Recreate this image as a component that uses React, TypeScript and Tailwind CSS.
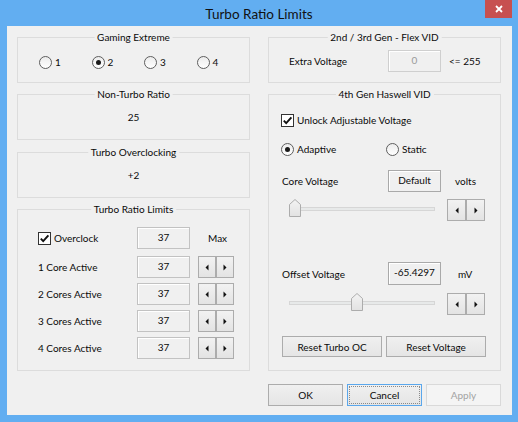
import type { ReactNode } from "react";

function GroupBox({ title, className, children }: { title: string; className?: string; children?: ReactNode }) {
  return (
    <div className={`relative border border-[#dcdcdc] ${className ?? ""}`}>
      <span className="absolute left-1/2 -top-[8px] -translate-x-1/2 whitespace-nowrap bg-[#f0f0f0] px-[3px] leading-[14px]">
        {title}
      </span>
      {children}
    </div>
  );
}

function Radio({ checked, label }: { checked?: boolean; label: string }) {
  return (
    <span className="flex items-center gap-[3px]">
      <span className="flex h-[13px] w-[13px] items-center justify-center rounded-full border border-[#5e5e5e] bg-linear-to-b from-[#ececec] to-white">
        {checked && <span className="h-[5px] w-[5px] rounded-full bg-[#1a1a1a]" />}
      </span>
      <span>{label}</span>
    </span>
  );
}

function Checkbox() {
  return (
    <span className="flex h-[13px] w-[13px] items-center justify-center border border-[#333] bg-white">
      <svg width="11" height="11" viewBox="0 0 11 11">
        <path d="M1.8 5.6 L4.2 8.2 L9.4 2.4" fill="none" stroke="#111" strokeWidth="1.9" />
      </svg>
    </span>
  );
}

function Arrow({ dir }: { dir: "l" | "r" }) {
  return (
    <svg width="4" height="7" viewBox="0 0 4 7">
      <path d={dir === "l" ? "M3.5 0.5 L0.5 3.5 L3.5 6.5 Z" : "M0.5 0.5 L3.5 3.5 L0.5 6.5 Z"} fill="#111" />
    </svg>
  );
}

function Spin({ wide, className }: { wide?: boolean; className?: string }) {
  const b = `flex h-[22px] items-center justify-center border border-[#acacac] bg-linear-to-b from-[#f2f2f2] to-[#e3e3e3] ${
    wide ? "w-[19px]" : "w-[18px]"
  }`;
  return (
    <div className={`flex ${className ?? ""}`}>
      <div className={b}>
        <Arrow dir="l" />
      </div>
      <div className={b}>
        <Arrow dir="r" />
      </div>
    </div>
  );
}

function ValueBox({ children, className }: { children: ReactNode; className?: string }) {
  return (
    <div
      className={`flex h-[22px] w-[53px] justify-center border bg-[#f0f0f0] pt-[2px] leading-[14px] shadow-[inset_1px_1px_0_#fff] ${
        className ?? "border-[#c2c2c2]"
      }`}
    >
      {children}
    </div>
  );
}

function Slider({ thumb }: { thumb: "start" | "mid" }) {
  return (
    <div className="relative ml-[8px] h-[17px] w-[146px] self-start pt-[8px]">
      <div className="h-[4px] w-full border border-[#d6d6d6] bg-[#e7e9e9]" />
      <svg
        width="12"
        height="18"
        viewBox="0 0 12 18"
        className={`absolute top-0 ${thumb === "start" ? "left-0" : "left-[62px]"}`}
      >
        <defs>
          <linearGradient id={`th-${thumb}`} x1="0" y1="0" x2="0" y2="1">
            <stop offset="0" stopColor="#f3f3f3" />
            <stop offset="1" stopColor="#e2e2e2" />
          </linearGradient>
        </defs>
        <path d="M0.5 17.5 V5.5 L6 0.5 L11.5 5.5 V17.5 Z" fill={`url(#th-${thumb})`} stroke="#acacac" />
      </svg>
    </div>
  );
}

function Button({ children, className }: { children: ReactNode; className?: string }) {
  return (
    <div
      className={`flex items-center justify-center border ${
        className ?? "border-[#acacac] bg-linear-to-b from-[#f0f0f0] to-[#e5e5e5]"
      }`}
    >
      <span>{children}</span>
    </div>
  );
}

const cores = ["1 Core Active", "2 Cores Active", "3 Cores Active", "4 Cores Active"];

export default function App() {
  return (
    <div className="flex h-[422px] w-[518px] flex-col bg-[#62aef1] font-[Lato,'Noto_Sans',sans-serif] text-[10px] leading-[14px] text-[#0a0a0a]">
      {/* title bar */}
      <div className="flex h-[26px] shrink-0">
        <div className="w-[33px]" />
        <div className="flex flex-1 items-center justify-center pt-[1px] text-[13.5px] text-[#111]">Turbo Ratio Limits</div>
        <div className="flex w-[33px] items-start">
          <div className="flex h-[18px] w-[27px] items-center justify-center bg-[#c75050]">
            <svg width="8" height="8" viewBox="0 0 8 8">
              <path d="M1 1 L7 7 M7 1 L1 7" stroke="#fff" strokeWidth="1.8" />
            </svg>
          </div>
        </div>
      </div>

      {/* client area */}
      <div className="mb-[7px] ml-[7px] mr-[6px] flex flex-1 flex-col bg-[#f0f0f0] pl-[10px] pr-[11px] pt-[11px]">
        <div className="grid grid-cols-[233px_233px] gap-x-[18px]">
          {/* left column */}
          <div className="flex flex-col">
            <GroupBox title="Gaming Extreme" className="h-[46px]">
              <div className="flex h-full items-center pl-[21px] pt-[4px]">
                {["1", "2", "3", "4"].map((n) => (
                  <div key={n} className="w-[53px]">
                    <Radio checked={n === "2"} label={n} />
                  </div>
                ))}
              </div>
            </GroupBox>
            <GroupBox title="Non-Turbo Ratio" className="mt-[11px] h-[46px]">
              <div className="flex h-full items-center justify-center">25</div>
            </GroupBox>
            <GroupBox title="Turbo Overclocking" className="mt-[12px] h-[46px]">
              <div className="flex h-full items-center justify-center">+2</div>
            </GroupBox>
            <GroupBox title="Turbo Ratio Limits" className="mt-[11px] h-[162px]">
              <div className="flex flex-col pl-[20px] pt-[17px]">
                <div className="flex h-[22px] items-center">
                  <div className="flex w-[99px] items-center">
                    <Checkbox />
                    <span className="ml-[3px]">Overclock</span>
                  </div>
                  <ValueBox>37</ValueBox>
                  <span className="ml-[18px]">Max</span>
                </div>
                {cores.map((c, i) => (
                  <div key={c} className={`flex h-[22px] items-center ${i === 0 ? "mt-[7px]" : "mt-[5px]"}`}>
                    <span className="w-[99px]">{c}</span>
                    <ValueBox>37</ValueBox>
                    <Spin className="ml-[8px]" />
                  </div>
                ))}
              </div>
            </GroupBox>
          </div>

          {/* right column */}
          <div className="flex flex-col">
            <GroupBox title="2nd / 3rd Gen - Flex VID" className="h-[46px]">
              <div className="flex h-full items-center pl-[20px] pt-[2px]">
                <span className="w-[99px]">Extra Voltage</span>
                <ValueBox className="border-[#cfcfcf] text-[#9a9a9a]">0</ValueBox>
                <span className="ml-[8px]">&lt;= 255</span>
              </div>
            </GroupBox>
            <GroupBox title="4th Gen Haswell VID" className="mt-[11px] h-[277px]">
              <div className="flex flex-col pl-[12px] pt-[17px]">
                <div className="flex h-[16px] items-center">
                  <Checkbox />
                  <span className="ml-[3px]">Unlock Adjustable Voltage</span>
                </div>
                <div className="mt-[13px] flex h-[16px] items-center">
                  <div className="w-[105px]">
                    <Radio checked label="Adaptive" />
                  </div>
                  <Radio label="Static" />
                </div>
                <div className="mt-[13px] flex h-[22px] items-center">
                  <span className="w-[107px] pl-[1px]">Core Voltage</span>
                  <ValueBox className="border-[#a9a9a9]">Default</ValueBox>
                  <span className="ml-[14px]">volts</span>
                </div>
                <div className="mt-[7px] flex h-[22px] items-center">
                  <Slider thumb="start" />
                  <Spin wide className="ml-[12px]" />
                </div>
                <div className="mt-[41px] flex h-[23px] items-center">
                  <span className="w-[107px] pl-[1px]">Offset Voltage</span>
                  <ValueBox className="h-[23px] border-[#a9a9a9]">-65.4297</ValueBox>
                  <span className="ml-[17px]">mV</span>
                </div>
                <div className="mt-[8px] flex h-[22px] items-center">
                  <Slider thumb="mid" />
                  <Spin wide className="ml-[12px]" />
                </div>
                <div className="ml-[1px] mt-[21px] flex gap-[4px]">
                  <Button className="h-[21px] w-[100px] border-[#acacac] bg-linear-to-b from-[#f0f0f0] to-[#e5e5e5]">
                    Reset Turbo OC
                  </Button>
                  <Button className="h-[21px] w-[100px] border-[#acacac] bg-linear-to-b from-[#f0f0f0] to-[#e5e5e5]">
                    Reset Voltage
                  </Button>
                </div>
              </div>
            </GroupBox>
          </div>
        </div>

        {/* dialog buttons */}
        <div className="mt-[13px] flex justify-end gap-[4px]">
          <Button className="h-[22px] w-[75px] border-[#acacac] bg-linear-to-b from-[#f0f0f0] to-[#e5e5e5]">OK</Button>
          <div className="flex h-[22px] w-[75px] border border-[#5aa7ec] bg-linear-to-b from-[#f0f0f0] to-[#e5e5e5] p-[1px]">
            <span className="flex flex-1 items-center justify-center border border-dotted border-[#8a8a8a]">Cancel</span>
          </div>
          <Button className="h-[22px] w-[75px] border-[#d9d9d9] bg-[#f4f4f4] text-[#a3a3a3]">Apply</Button>
        </div>
      </div>
    </div>
  );
}
